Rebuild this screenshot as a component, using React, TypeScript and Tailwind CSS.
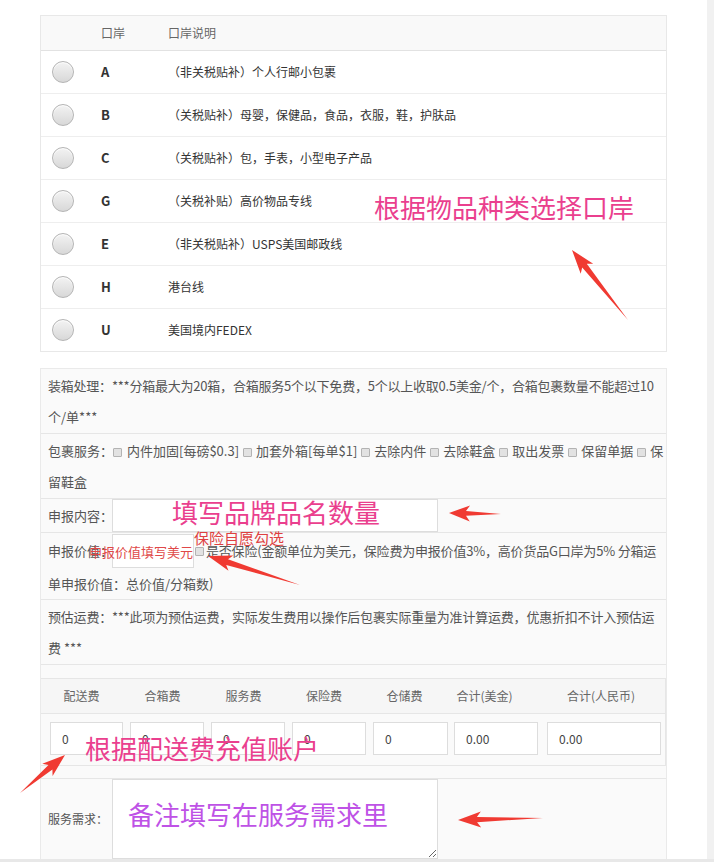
import React from "react";

const ports = [
  { code: "A", desc: "（非关税贴补）个人行邮小包裹" },
  { code: "B", desc: "（关税贴补）母婴，保健品，食品，衣服，鞋，护肤品" },
  { code: "C", desc: "（关税贴补）包，手表，小型电子产品" },
  { code: "G", desc: "（关税补贴）高价物品专线" },
  { code: "E", desc: "（非关税贴补）USPS美国邮政线" },
  { code: "H", desc: "港台线" },
  { code: "U", desc: "美国境内FEDEX" },
];

const feeHeaders = [
  { label: "配送费", className: "w-[81px] text-center" },
  { label: "合箱费", className: "w-[81px] text-center" },
  { label: "服务费", className: "w-[81px] text-center" },
  { label: "保险费", className: "w-[80px] text-center" },
  { label: "仓储费", className: "w-[81px] text-center" },
  { label: "合计(美金)", className: "w-[79px] text-center" },
  { label: "合计(人民币)", className: "pl-[43px]" },
];

const feeInputs = [
  { value: "0", cell: "w-[80px]", input: "w-[73px]" },
  { value: "0", cell: "w-[81px]", input: "w-[74px]" },
  { value: "0", cell: "w-[81px]", input: "w-[74px]" },
  { value: "0", cell: "w-[81px]", input: "w-[74px]" },
  { value: "0", cell: "w-[81px]", input: "w-[75px]" },
  { value: "0.00", cell: "w-[93px]", input: "w-[84px]" },
  { value: "0.00", cell: "w-[116px]", input: "w-[114px]" },
];

const Check = ({ className = "mx-[4px]" }: { className?: string }) => (
  <span className={`${className} inline-block h-[9px] w-[9px] rounded-[1px] border border-[#b3b3b3] bg-[#e2e2e2] align-[-1px]`} />
);

const Radio = () => (
  <span className="block h-[22px] w-[22px] rounded-full border border-[#b5b5b5] bg-linear-to-b from-[#f3f3f3] to-[#d8d8d8] shadow-[inset_0_1px_1px_rgba(255,255,255,0.9)]" />
);

// red pointer arrow: narrow tail widening into a barbed head
const arrowPoints = (tx: number, ty: number, px: number, py: number, head = 18, wing = 8, shaft = 2.6) => {
  const dx = px - tx;
  const dy = py - ty;
  const len = Math.hypot(dx, dy);
  const ux = dx / len;
  const uy = dy / len;
  const nx = -uy;
  const ny = ux;
  const bx = px - ux * head;
  const by = py - uy * head;
  const wx = px - ux * (head + 4);
  const wy = py - uy * (head + 4);
  const pts = [
    [tx, ty],
    [bx + nx * shaft, by + ny * shaft],
    [wx + nx * wing, wy + ny * wing],
    [px, py],
    [wx - nx * wing, wy - ny * wing],
    [bx - nx * shaft, by - ny * shaft],
  ];
  return pts.map(([x, y]) => `${x.toFixed(1)},${y.toFixed(1)}`).join(" ");
};

const arrows = [
  arrowPoints(628, 320, 572, 250, 20, 8, 3),
  arrowPoints(501, 514, 449, 513, 17, 8, 2.4),
  arrowPoints(300, 585, 208, 556, 20, 8, 3),
  arrowPoints(20, 793, 65, 755, 19, 8, 3),
  arrowPoints(543, 818, 458, 820, 19, 8, 2.6),
];

export default function App() {
  return (
    <div className="flex min-h-[862px] flex-col bg-white font-['Noto_Sans_CJK_SC',sans-serif] text-[#555]">
      <div className="flex flex-1">
        <div className="relative w-[707px] shrink-0">
          <div className="w-[667px] pl-[40px] pt-[15px]">
            {/* port list */}
            <div className="border border-[#e8e8e8] bg-white">
              <div className="flex h-[35px] items-center border-b border-[#e2e2e2] bg-[#f9f9f9] text-[12px] text-[#666]">
                <div className="w-[60px]" />
                <div className="w-[67px]">口岸</div>
                <div>口岸说明</div>
              </div>
              {ports.map((p, i) => (
                <div
                  key={p.code}
                  className={i === 0 ? "flex h-[42px] items-center text-[12px] text-[#333]" : "flex h-[43px] items-center border-t border-[#eee] text-[12px] text-[#333]"}
                >
                  <div className="w-[60px] pl-[11px]">
                    <Radio />
                  </div>
                  <div className="w-[67px] text-[13px] font-bold">{p.code}</div>
                  <div>{p.desc}</div>
                </div>
              ))}
            </div>

            {/* order form */}
            <div className="mt-[16px] border-x border-t border-[#eaeaea] bg-[#fafafa] text-[13px]">
              <div className="border-b border-[#e6e6e6] py-[1px] pl-[7px] leading-[31px]">
                <div className="whitespace-nowrap tracking-[-0.22px]">装箱处理：***分箱最大为20箱，合箱服务5个以下免费，5个以上收取0.5美金/个，合箱包裹数量不能超过10</div>
                <div>个/单***</div>
              </div>

              <div className="border-b border-[#e6e6e6] py-[1px] pl-[7px] leading-[31px]">
                <div className="whitespace-nowrap">
                  包裹服务：<Check className="mr-[5px]" />内件加固[每磅$0.3]<Check />加套外箱[每单$1]<Check />去除内件<Check />去除鞋盒<Check />取出发票<Check />保留单据<Check />保
                </div>
                <div>留鞋盒</div>
              </div>

              <div className="flex h-[34px] items-start border-b border-[#e6e6e6] pl-[7px]">
                <span className="w-[64px] shrink-0 whitespace-nowrap leading-[33px]">申报内容：</span>
                <input readOnly className="h-[33px] w-[326px] border border-[#ddd] bg-white" />
              </div>

              <div className="border-b border-[#e6e6e6] pl-[7px]">
                <div className="flex h-[35px] items-center whitespace-nowrap pt-[1px]">
                  <span className="w-[64px] shrink-0">申报价值：</span>
                  <input readOnly className="h-[34px] w-[82px] shrink-0 border border-[#ddd] bg-white" />
                  <span className="ml-[1px] mr-[2px] inline-block h-[9px] w-[9px] shrink-0 rounded-[1px] border border-[#b3b3b3] bg-[#e2e2e2]" />
                  <span className="tracking-[-0.2px]">是否保险(金额单位为美元，保险费为申报价值3%，高价货品G口岸为5% 分箱运</span>
                </div>
                <div className="leading-[31px]">单申报价值：总价值/分箱数)</div>
              </div>

              <div className="border-b border-[#e6e6e6] py-[1px] pl-[7px] leading-[31px]">
                <div className="whitespace-nowrap tracking-[-0.2px]">预估运费：***此项为预估运费，实际发生费用以操作后包裹实际重量为准计算运费，优惠折扣不计入预估运</div>
                <div>费 ***</div>
              </div>

              {/* fees */}
              <div className="mt-[13px] border-y border-r border-[#e6e6e6] text-[12px]">
                <div className="flex h-[35px] items-center border-b border-[#e6e6e6] bg-[#f6f6f6] text-[#666]">
                  {feeHeaders.map((h) => (
                    <div key={h.label} className={h.className}>
                      {h.label}
                    </div>
                  ))}
                </div>
                <div className="flex pb-[10px] pl-[9px] pt-[8px]">
                  {feeInputs.map((f, i) => (
                    <div key={i} className={f.cell}>
                      <input
                        readOnly
                        value={f.value}
                        className={`${f.input} h-[33px] border border-[#ddd] bg-white px-[11px] text-[12px] text-[#444]`}
                      />
                    </div>
                  ))}
                </div>
              </div>

              <div className="mt-[12px] flex items-center border-t border-[#e6e6e6] pl-[7px] text-[12px]">
                <span className="w-[64px] shrink-0 whitespace-nowrap">服务需求：</span>
                <textarea readOnly className="h-[80px] w-[326px] resize border border-[#ddd] bg-white" />
              </div>
            </div>
          </div>

          {/* annotations drawn over the screenshot */}
          <svg className="pointer-events-none absolute left-0 top-0 h-[862px] w-[707px]" viewBox="0 0 707 862">
            {arrows.map((pts, i) => (
              <polygon key={i} points={pts} fill="#f03a32" />
            ))}
          </svg>
          <div className="pointer-events-none absolute left-[374px] top-[194px] whitespace-nowrap text-[26px] leading-none text-[#ea3f8e]">根据物品种类选择口岸</div>
          <div className="pointer-events-none absolute left-[172px] top-[499px] whitespace-nowrap text-[26px] leading-none text-[#ea3f8e]">填写品牌品名数量</div>
          <div className="pointer-events-none absolute left-[194px] top-[530px] whitespace-nowrap text-[15px] leading-none text-[#de4040]">保险自愿勾选</div>
          <div className="pointer-events-none absolute left-[89px] top-[545px] whitespace-nowrap text-[13px] leading-none text-[#e04848]">申报价值填写美元</div>
          <div className="pointer-events-none absolute left-[85px] top-[735px] whitespace-nowrap text-[26px] leading-none text-[#ea3f8e]">根据配送费充值账户</div>
          <div className="pointer-events-none absolute left-[128px] top-[801px] whitespace-nowrap text-[26px] leading-none text-[#be52e6]">备注填写在服务需求里</div>
        </div>
        <div className="w-[7px] bg-[#f1f1f1]" />
      </div>
      <div className="h-[4px] bg-[#e8e8e8]" />
    </div>
  );
}
